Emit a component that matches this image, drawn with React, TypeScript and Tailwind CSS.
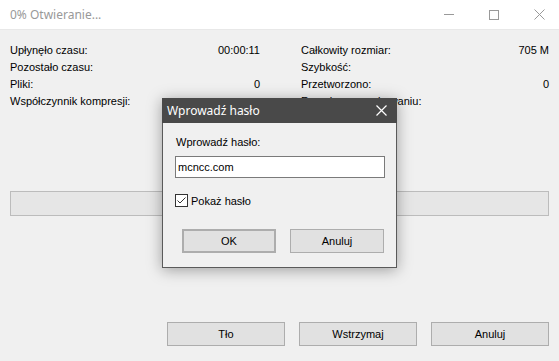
import React from "react";

const sans = { fontFamily: '"Liberation Sans", Arial, sans-serif' };

function Row({ label, value }: { label: string; value?: string }) {
  return (
    <div className="flex h-[17px] items-center justify-between leading-[17px]">
      <span>{label}</span>
      <span>{value ?? ""}</span>
    </div>
  );
}

function Btn({ children, className = "" }: { children: React.ReactNode; className?: string }) {
  return (
    <div
      className={
        "flex items-center justify-center bg-[#e1e1e1] border border-[#adadad] text-[11px] text-black " +
        className
      }
    >
      {children}
    </div>
  );
}

export default function App() {
  return (
    <div
      className="relative w-[559px] h-[361px] overflow-hidden bg-[#f0f0f0] text-[11px] text-black"
      style={sans}
    >
      {/* title bar */}
      <div className="flex h-[30px] items-center bg-white border-b border-[#e8e8e8]">
        <span
          className="pl-[10px] text-[12px] text-[#999999]"
          style={{ fontFamily: '"Noto Sans", "Open Sans", sans-serif' }}
        >
          0% Otwieranie...
        </span>
        <div className="ml-auto mr-[-3px] flex h-full">
          <div className="flex w-[45px] items-center justify-center">
            <div className="h-px w-[10px] bg-[#999999]" />
          </div>
          <div className="flex w-[45px] items-center justify-center">
            <div className="h-[10px] w-[10px] border border-[#999999]" />
          </div>
          <div className="flex w-[46px] items-center justify-center">
            <svg width="11" height="11" viewBox="0 0 11 11">
              <path d="M0.5 0.5 L10.5 10.5 M10.5 0.5 L0.5 10.5" stroke="#999999" strokeWidth="1" />
            </svg>
          </div>
        </div>
      </div>

      {/* info */}
      <div className="grid grid-cols-[250px_248px] gap-x-[41px] pl-[10px] pt-[12px]">
        <div>
          <Row label="Upłynęło czasu:" value="00:00:11" />
          <Row label="Pozostało czasu:" />
          <Row label="Pliki:" value="0" />
          <Row label="Współczynnik kompresji:" />
        </div>
        <div>
          <Row label="Całkowity rozmiar:" value="705 M" />
          <Row label="Szybkość:" />
          <Row label="Przetworzono:" value="0" />
          <Row label="Rozmiar po spakowaniu:" />
        </div>
      </div>

      {/* progress */}
      <div className="mx-[10px] mt-[81px] h-[25px] border border-[#bcbcbc] bg-[#e6e6e6]" />

      {/* bottom buttons */}
      <div className="mt-[106px] flex justify-end gap-[14px] pr-[10px]">
        <Btn className="h-[24px] w-[118px]">Tło</Btn>
        <Btn className="h-[24px] w-[118px]">Wstrzymaj</Btn>
        <Btn className="h-[24px] w-[118px]">Anuluj</Btn>
      </div>

      {/* dialog */}
      <div className="absolute left-[162px] top-[98px] w-[235px] h-[170px] flex flex-col shadow-[0_2px_14px_rgba(0,0,0,0.35)]">
        <div className="flex h-[25px] items-center bg-[#494949] pl-[5px]">
          <span
            className="text-[12px] text-white"
            style={{ fontFamily: '"Noto Sans", "Open Sans", sans-serif' }}
          >
            Wprowadź hasło
          </span>
          <svg className="ml-auto mr-[10px]" width="11" height="11" viewBox="0 0 11 11">
            <path d="M0.5 0.5 L10.5 10.5 M10.5 0.5 L0.5 10.5" stroke="#ffffff" strokeWidth="1.2" />
          </svg>
        </div>
        <div className="flex-1 border border-t-0 border-[#5a5a5a] bg-[#f0f0f0] pl-[12px] pt-[11px]">
          <div className="h-[17px] leading-[17px] pl-px">Wprowadź hasło:</div>
          <div className="mt-[5px] flex h-[22px] w-[210px] items-center border border-[#7a7a7a] bg-white pl-[2px]">
            mcncc.com
          </div>
          <div className="mt-[14px] flex items-center gap-[3px]">
            <div className="flex h-[13px] w-[13px] items-center justify-center border border-[#333333] bg-white">
              <svg width="11" height="11" viewBox="0 0 11 11">
                <path d="M1.5 5.5 L4 8 L9.5 2.5" stroke="#333333" strokeWidth="1" fill="none" />
              </svg>
            </div>
            <span className="leading-[13px] pt-[3px]">Pokaż hasło</span>
          </div>
          <div className="mt-[21px] flex gap-[14px] pl-[7px]">
            <Btn className="h-[24px] w-[94px] border-2 border-[#0078d7]">OK</Btn>
            <Btn className="h-[24px] w-[94px]">Anuluj</Btn>
          </div>
        </div>
      </div>
    </div>
  );
}
